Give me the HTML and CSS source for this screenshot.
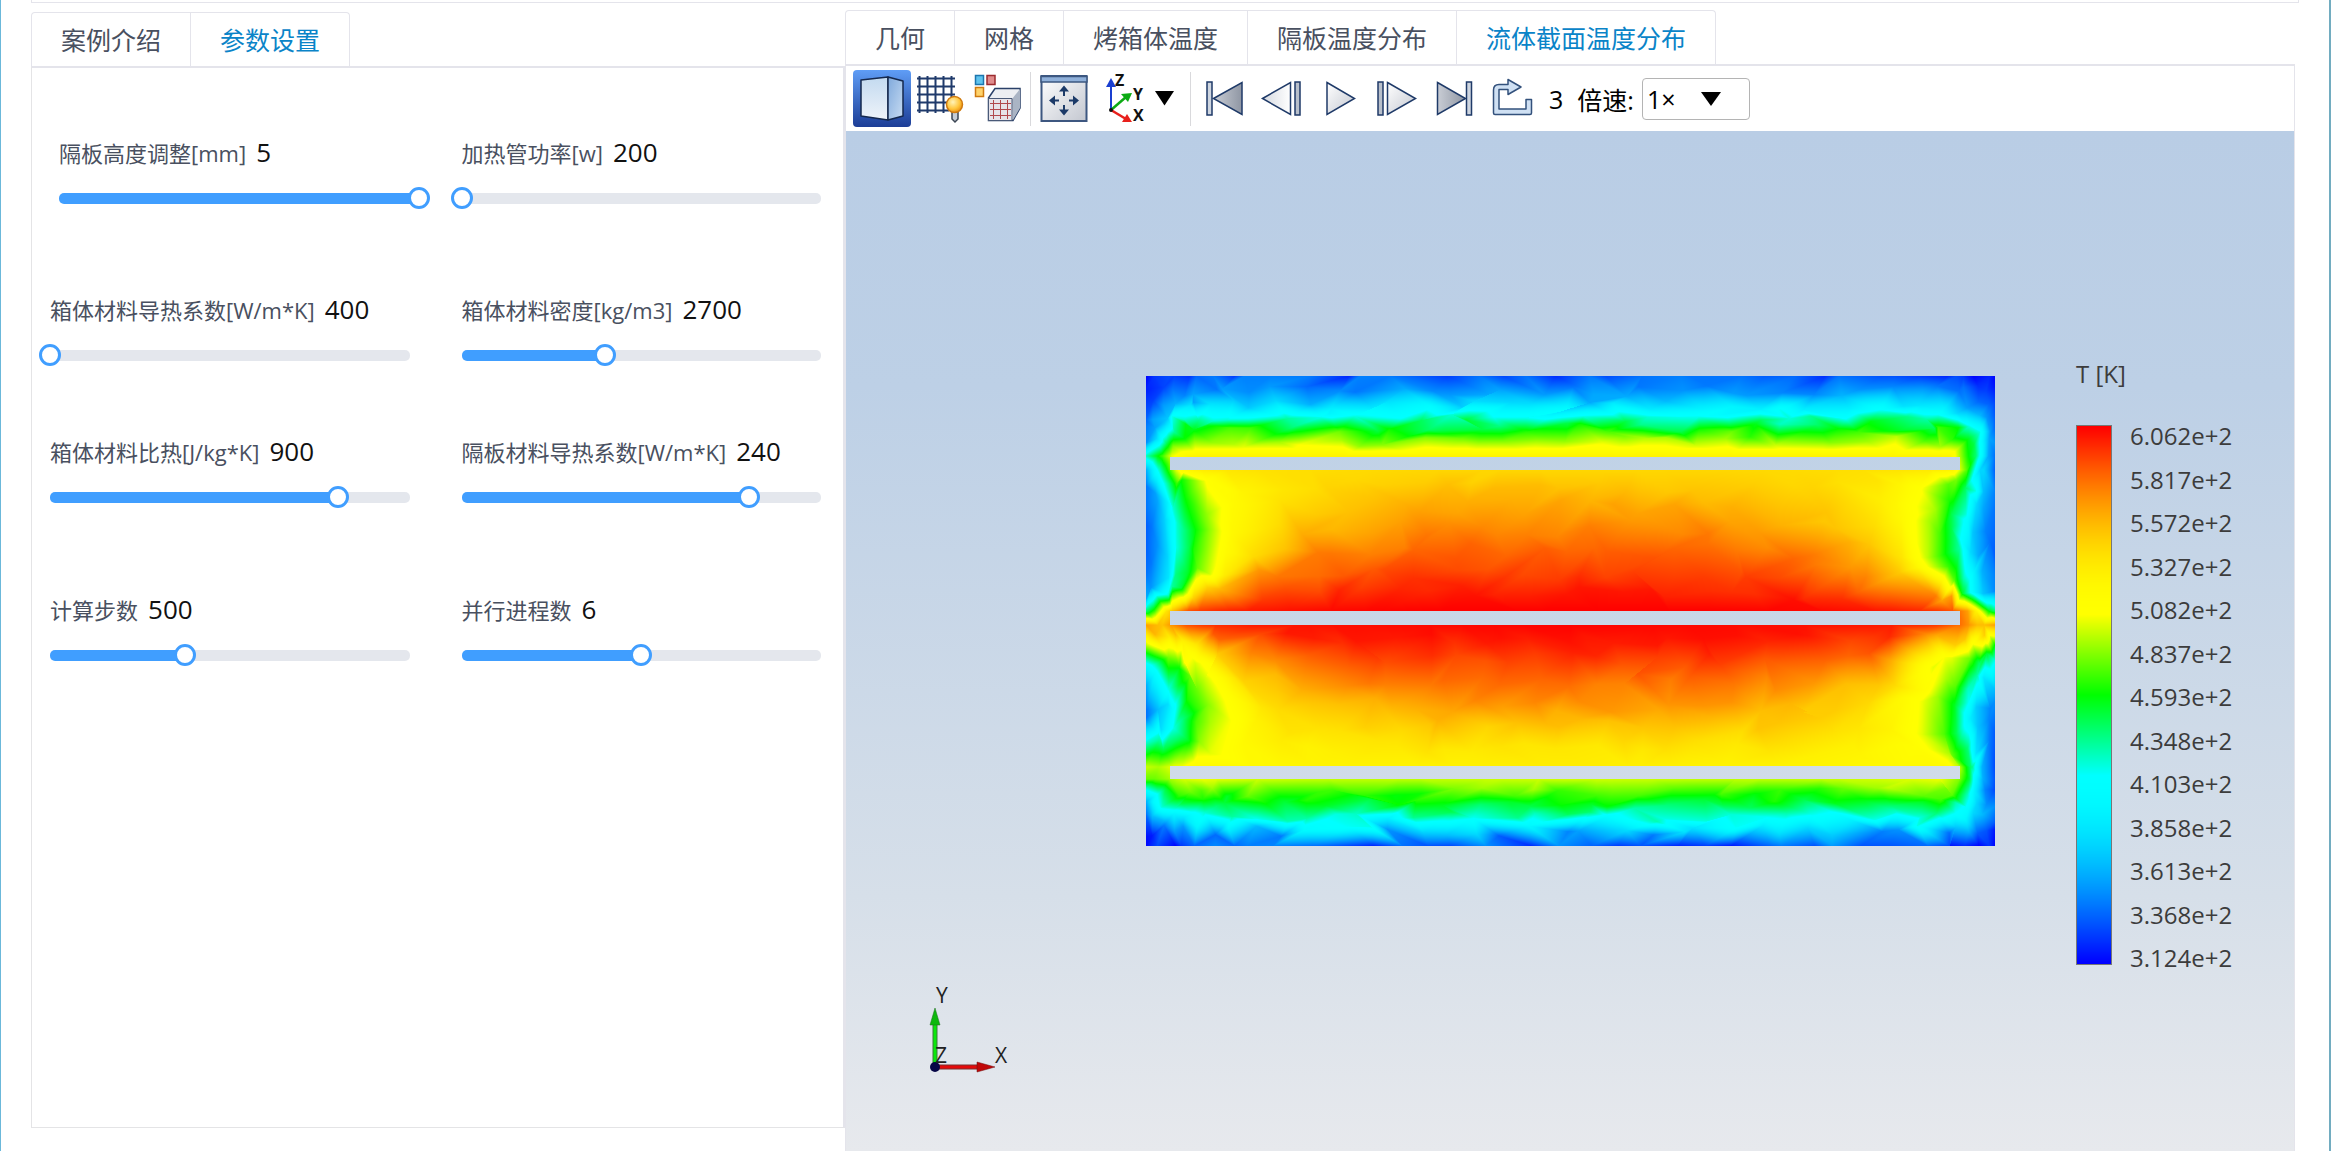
FILE: index.html
```html
<!DOCTYPE html>
<html lang="zh-CN">
<head>
<meta charset="utf-8">
<title>烤箱仿真</title>
<meta name="viewport" content="width=device-width, initial-scale=1">
<link rel="stylesheet" href="styles.css">
</head>
<body>
<div class="app">
  <div class="strip"></div>
  <main class="columns">
    <section class="settings">
      <nav class="tabs">
        <button class="tab" type="button">案例介绍</button>
        <button class="tab active" type="button">参数设置</button>
      </nav>
      <form class="params">
        <div class="param inset">
          <label class="name" for="p1">隔板高度调整[mm]</label><output class="value" for="p1">5</output>
          <div class="slider" style="--fill:100%"><input id="p1" type="range" min="0" max="100" step="any" value="100"></div>
        </div>
        <div class="param">
          <label class="name" for="p2">加热管功率[w]</label><output class="value" for="p2">200</output>
          <div class="slider" style="--fill:0%"><input id="p2" type="range" min="0" max="100" step="any" value="0"></div>
        </div>
        <div class="param">
          <label class="name" for="p3">箱体材料导热系数[W/m*K]</label><output class="value" for="p3">400</output>
          <div class="slider" style="--fill:0%"><input id="p3" type="range" min="0" max="100" step="any" value="0"></div>
        </div>
        <div class="param">
          <label class="name" for="p4">箱体材料密度[kg/m3]</label><output class="value" for="p4">2700</output>
          <div class="slider" style="--fill:40%"><input id="p4" type="range" min="0" max="100" step="any" value="40"></div>
        </div>
        <div class="param">
          <label class="name" for="p5">箱体材料比热[J/kg*K]</label><output class="value" for="p5">900</output>
          <div class="slider" style="--fill:80%"><input id="p5" type="range" min="0" max="100" step="any" value="80"></div>
        </div>
        <div class="param">
          <label class="name" for="p6">隔板材料导热系数[W/m*K]</label><output class="value" for="p6">240</output>
          <div class="slider" style="--fill:80%"><input id="p6" type="range" min="0" max="100" step="any" value="80"></div>
        </div>
        <div class="param">
          <label class="name" for="p7">计算步数</label><output class="value" for="p7">500</output>
          <div class="slider" style="--fill:37.5%"><input id="p7" type="range" min="0" max="100" step="any" value="37.5"></div>
        </div>
        <div class="param">
          <label class="name" for="p8">并行进程数</label><output class="value" for="p8">6</output>
          <div class="slider" style="--fill:50%"><input id="p8" type="range" min="0" max="100" step="any" value="50"></div>
        </div>
      </form>
    </section>

    <section class="results">
      <nav class="tabs">
        <button class="tab" type="button">几何</button>
        <button class="tab" type="button">网格</button>
        <button class="tab" type="button">烤箱体温度</button>
        <button class="tab" type="button">隔板温度分布</button>
        <button class="tab active" type="button">流体截面温度分布</button>
      </nav>
      <div class="viewer">
        <svg class="defs" width="0" height="0" aria-hidden="true">
          <defs>
            <linearGradient id="gFace" x1="0" y1="0" x2="0" y2="1"><stop offset="0" stop-color="#c3daf0"/><stop offset="1" stop-color="#eef3f9"/></linearGradient>
            <linearGradient id="gSide" x1="0" y1="0" x2="1" y2="1"><stop offset="0" stop-color="#7fa9dc"/><stop offset="1" stop-color="#c8dcf2"/></linearGradient>
            <linearGradient id="gGrey" x1="0" y1="0" x2="1" y2="1"><stop offset="0" stop-color="#ffffff"/><stop offset="1" stop-color="#c3c7d0"/></linearGradient>
            <linearGradient id="gDark" x1="0" y1="0" x2="1" y2="0"><stop offset="0" stop-color="#c9cdd5"/><stop offset="1" stop-color="#8f96a3"/></linearGradient>
            <linearGradient id="gLight" x1="0" y1="0" x2="1" y2="0"><stop offset="0" stop-color="#d5d9e0"/><stop offset="1" stop-color="#ffffff"/></linearGradient>
            <radialGradient id="gBall" cx="0.4" cy="0.35" r="0.7"><stop offset="0" stop-color="#fff3b8"/><stop offset="0.6" stop-color="#ffc63c"/><stop offset="1" stop-color="#e88a10"/></radialGradient>
          </defs>
        </svg>
        <div class="toolbar">
          <button class="tool on" type="button" aria-label="实体">
            <svg width="58" height="57" viewBox="0 0 58 57" stroke="#14284e" stroke-width="1.5" stroke-linejoin="round"><path d="M8 10 35 7V50L8 46Z" fill="url(#gFace)"/><path d="M35 7 50 11V46L35 50Z" fill="url(#gSide)"/></svg>
          </button>
          <button class="tool" type="button" aria-label="网格显示">
            <svg width="58" height="57" viewBox="0 0 58 57" fill="none"><path d="M8.500 6V43M16.500 6V43M24.500 6V43M32.500 6V43M40.500 6V36M6 8.500H44M6 16.500H44M6 24.500H44M6 32.500H38M6 40.500H38" stroke="#1f3a6b" stroke-width="2"/><path d="M41 42h6v7l-3 3-3-3z" fill="#c5ccd6" stroke="#3c4654" stroke-width="1.500"/><circle cx="43.500" cy="34.500" r="8" fill="url(#gBall)" stroke="#cf7a10" stroke-width="1.500"/></svg>
          </button>
          <button class="tool" type="button" aria-label="显示部件">
            <svg width="58" height="57" viewBox="0 0 58 57"><rect x="6.500" y="5.500" width="8" height="9" fill="#5fc3ee" stroke="#1c76ae" stroke-width="1.500"/><rect x="18" y="5.500" width="8" height="9" fill="#e08c8c" stroke="#9c2b2f" stroke-width="1.500"/><rect x="6.500" y="17.500" width="8" height="9" fill="#ffd36b" stroke="#cf7a10" stroke-width="1.500"/><path d="M19.500 28 26 18.500H51V38L44 50.500H19.500Z" fill="#eceef2" stroke="#2a4068" stroke-width="1.500"/><path d="M43 29 51 19V38L44 50Z" fill="#aab4c4"/><path d="M19.500 28.500H43V50.500H19.500Z" fill="#e6e3e9" stroke="#4a5a78"/><path d="M24.500 30V49M31.500 30V49M38.500 30V49M21 33.500H42M21 39.500H42M21 45.500H42" stroke="#b0484c" stroke-width="1"/></svg>
          </button>
          <span class="sep"></span>
          <button class="tool" type="button" aria-label="适应窗口">
            <svg width="58" height="57" viewBox="0 0 58 57"><rect x="6.500" y="6" width="45" height="45" fill="url(#gGrey)" stroke="#3d5780" stroke-width="2"/><path d="M6 6.500H52V12H6Z" fill="#8fb0da" stroke="#3d5780" stroke-width="1.500"/><path d="M29 20V26M29 35V42M18 30.500H24M34 30.500H40" stroke="#1c3a68" stroke-width="2"/><path d="M29 15.500 34 21.500H24ZM29 45.500 34 39.500H24ZM14 30.500 20 25.500V35.500ZM44 30.500 38 25.500V35.500Z" fill="#1c3a68"/></svg>
          </button>
          <button class="tool axes" type="button" aria-label="视角">
            <svg width="78" height="57" viewBox="0 0 78 57"><path d="M12 40V14" stroke="#1a3fd0" stroke-width="2"/><path d="M12 8 17 17H7Z" fill="#1a3fd0"/><path d="M12 40 27 27" stroke="#0cab14" stroke-width="2.500"/><path d="M33 23 29 32 22 24Z" fill="#0cab14"/><path d="M12 40 27 49" stroke="#e8201c" stroke-width="2.500"/><path d="M33 52 23 52 28 44Z" fill="#e8201c"/><circle cx="12" cy="40" r="2" fill="#111"/><g class="axis-bold"><text x="16" y="16">Z</text><text x="34" y="30">Y</text><text x="34" y="51">X</text></g><path d="M56 21H75L65.500 35.500Z" fill="#000"/></svg>
          </button>
          <span class="sep"></span>
          <button class="tool" type="button" aria-label="第一帧">
            <svg width="58" height="57" viewBox="0 0 58 57" stroke="#1f3a68" stroke-width="1.500"><path d="M12 12h5v33h-5z" fill="#cfd6e0"/><path d="M18.500 28.500 47 12.500V44.500Z" fill="url(#gDark)"/></svg>
          </button>
          <button class="tool" type="button" aria-label="上一帧">
            <svg width="58" height="57" viewBox="0 0 58 57" stroke="#1f3a68" stroke-width="1.500"><path d="M9.500 28.500 37.500 12.500V44.500Z" fill="url(#gLight)"/><path d="M42 12h5v33h-5z" fill="#b8bfca"/></svg>
          </button>
          <button class="tool" type="button" aria-label="播放">
            <svg width="58" height="57" viewBox="0 0 58 57" stroke="#1f3a68" stroke-width="1.500"><path d="M16 12.500 43.500 28.500 16 44.500Z" fill="url(#gGrey)"/></svg>
          </button>
          <button class="tool" type="button" aria-label="下一帧">
            <svg width="58" height="57" viewBox="0 0 58 57" stroke="#1f3a68" stroke-width="1.500"><path d="M9 12h5v33h-5z" fill="#b8bfca"/><path d="M18.500 12.500 46.500 28.500 18.500 44.500Z" fill="url(#gGrey)"/></svg>
          </button>
          <button class="tool" type="button" aria-label="最后一帧">
            <svg width="58" height="57" viewBox="0 0 58 57" stroke="#1f3a68" stroke-width="1.500"><path d="M10.500 12.500 38.500 28.500 10.500 44.500Z" fill="url(#gDark)"/><path d="M39.500 12h5v33h-5z" fill="#cfd6e0"/></svg>
          </button>
          <button class="tool" type="button" aria-label="循环">
            <svg width="58" height="57" viewBox="0 0 58 57" stroke="#33517c" stroke-width="1.500" stroke-linejoin="round"><path d="M8.500 43V20Q8.500 14.500 14 14.500H23V9.500L36 17 23 24.500V19.500H14V39H41V29.500H46.500V43Q46.500 44.500 45 44.500H10Q8.500 44.500 8.500 43Z" fill="#cfe0f3"/></svg>
          </button>
          <span class="frame">3</span>
          <label class="speed-label" for="speed">倍速:</label>
          <span class="speed"><select id="speed"><option>1×</option><option>2×</option><option>4×</option></select></span>
        </div>
        <div class="scene">
          <canvas class="field" id="field" width="849" height="470"></canvas>
          <div class="legend">
            <div class="legend-title">T [K]</div>
            <div class="legend-body">
              <canvas class="bar" id="bar" width="34" height="538"></canvas>
              <ol class="ticks">
                <li>6.062e+2</li><li>5.817e+2</li><li>5.572e+2</li><li>5.327e+2</li><li>5.082e+2</li><li>4.837e+2</li><li>4.593e+2</li><li>4.348e+2</li><li>4.103e+2</li><li>3.858e+2</li><li>3.613e+2</li><li>3.368e+2</li><li>3.124e+2</li>
              </ol>
            </div>
          </div>
          <svg class="triad" width="100" height="106" viewBox="0 -10 100 106">
            <path d="M14 82V34" stroke="#3a7a3a" stroke-width="5"/><path d="M14 82V34" stroke="#0be80b" stroke-width="3"/><path d="M14 23 19 40H9Z" fill="#0cb80c" stroke="#1c6a1c" stroke-width=".5"/>
            <path d="M14 82H60" stroke="#7a3030" stroke-width="5"/><path d="M14 82H60" stroke="#e40a0a" stroke-width="3"/><path d="M74 82 56 77V87Z" fill="#c00808" stroke="#6a1010" stroke-width=".5"/>
            <circle cx="14" cy="82" r="5" fill="#060646"/>
            <g class="axis-name"><text x="15" y="18">Y</text><text x="74" y="78">X</text><text x="14" y="78">Z</text></g>
          </svg>
        </div>
      </div>
    </section>
  </main>
</div>
<script src="field.js"></script>
</body>
</html>
```
FILE: styles.css
```css
* { box-sizing: border-box; }

body {
  margin: 0;
  background: #fff;
  color: #111;
  font-family: "Open Sans", "Noto Sans CJK SC", sans-serif;
  font-size: 25px;
}

button, select { font: inherit; }

.app {
  display: flex;
  flex-direction: column;
  min-height: 100vh;
  padding: 0 30px;
  border-left: 1px solid #6bb8da;
  border-right: 2px solid #72acc0;
}

.strip {
  height: 3px;
  border: 1px solid #e4e4eb;
  border-top: 0;
}

.columns {
  flex: 1;
  display: grid;
  grid-template-columns: 814fr 1450fr;
  margin-right: 4px;
}

.settings {
  display: flex;
  flex-direction: column;
  padding: 9px 0 23px;
}

.results {
  display: flex;
  flex-direction: column;
  padding-top: 7px;
}

/* tabs */
.tabs {
  display: flex;
  height: 54px;
}

.tab {
  padding: 0 29px;
  border: solid #e4e4eb;
  border-width: 1px 1px 0 0;
  background: #fff;
  color: #495060;
  line-height: 48px;
  white-space: nowrap;
}

.tab:first-child { border-left-width: 1px; border-top-left-radius: 4px; }
.tab:last-child { border-top-right-radius: 4px; }
.tab.active { color: #0a84c8; }

/* parameters */
.params {
  flex: 1;
  display: grid;
  grid-template-columns: 360fr 360fr;
  grid-template-rows: 157px 142px 158px auto;
  align-content: start;
  column-gap: 52px;
  padding: 66px 22px 0 18px;
  border: 1px solid #e4e4e6;
  border-top: 2px solid #e4e4eb;
  border-right: 2px solid #e4e4eb;
}

.param { white-space: nowrap; }
.param.inset { position: relative; left: 9px; }

.name {
  display: inline-block;
  margin-right: 10px;
  color: #495060;
  font-size: 22px;
  line-height: 36px;
}

.value {
  font-size: 26px;
  line-height: 36px;
}

.slider {
  display: grid;
  align-items: center;
  height: 22px;
  margin-top: 16px;
}

.slider::before {
  content: "";
  grid-area: 1 / 1;
  height: 11px;
  border-radius: 5px;
  background: linear-gradient(to right, #409eff var(--fill), #e4e7ed var(--fill));
}

.slider input {
  grid-area: 1 / 1;
  appearance: none;
  height: 22px;
  margin: 0 -11px;
  background: transparent;
}

.slider input::-webkit-slider-thumb {
  appearance: none;
  width: 22px;
  height: 22px;
  border: 3px solid #409eff;
  border-radius: 50%;
  background: #fff;
}

/* viewer */
.viewer {
  flex: 1;
  display: flex;
  flex-direction: column;
  border: solid #e4e4eb;
  border-width: 2px 1px 0;
}

.defs { position: absolute; }

.toolbar {
  display: flex;
  align-items: center;
  height: 65px;
  padding-left: 7px;
  color: #000;
}

.tool {
  width: 58px;
  height: 57px;
  padding: 0;
  border: 0;
  border-radius: 4px;
  background: none;
}

.tool svg { display: block; overflow: visible; }
.tool.on { background: linear-gradient(#5f9df6, #1c3d96); }
.tool.axes { width: 78px; margin: 0 10px 0 6px; }

.sep {
  width: 1px;
  height: 54px;
  margin: 0 4px 0 3px;
  background: #d9d9dc;
}

.axis-bold {
  font: bold 16px "Open Sans", sans-serif;
  fill: #111;
}

.frame { margin: 0 14px 0 6px; }

.speed-label { margin-right: 8px; }

.speed {
  display: flex;
  align-items: center;
  width: 108px;
  height: 42px;
  border: 1px solid #b4b4b4;
  border-radius: 4px;
}

.speed select {
  flex: 1;
  width: 100%;
  height: 40px;
  padding: 0 0 0 4px;
  border: 0;
  background: none;
  color: #000;
  appearance: none;
}

.speed::after {
  content: "";
  margin: 0 28px 0 -48px;
  border: solid transparent;
  border-width: 14px 10px 0;
  border-top-color: #000;
  pointer-events: none;
}

.scene {
  position: relative;
  flex: 1;
  display: grid;
  grid-template-columns: 300fr 849fr 299fr;
  align-items: start;
  background: linear-gradient(#b9cde5, #bdd0e6 25%, #d6dfe9 75%, #e7e9ed);
}

.field {
  grid-column: 2;
  width: 100%;
  margin-top: 245px;
}

.legend {
  margin: 227px 0 0 81px;
  color: #3c3c3c;
  font-size: 24px;
}

.legend-title { line-height: 32px; }

.legend-body {
  display: flex;
  align-items: flex-start;
  gap: 18px;
  margin-top: 32px;
}

.bar {
  margin-top: 3px;
  border: 1px solid #777;
}

.ticks {
  display: flex;
  flex-direction: column;
  justify-content: space-between;
  height: 548px;
  margin: 0;
  padding: 2px 0 0;
  list-style: none;
  line-height: 24px;
}

.triad {
  position: absolute;
  left: 75px;
  bottom: 70px;
  overflow: visible;
}

.axis-name {
  font: 21px "Open Sans", sans-serif;
  fill: #222;
}
```
FILE: field.js
```js
// Normalised temperature (0 = coldest, 1 = hottest) to colour.
function shade(t) {
  t = Math.max(0, Math.min(1, t));
  if (t < 0.35) return [0, 255 * Math.sin(Math.PI / 2 * t / 0.35), 255];
  if (t < 0.5) return [0, 255, 255 * (0.5 - t) / 0.15];
  if (t < 0.65) return [255 * (t - 0.5) / 0.15, 255, 0];
  return [255, 255 * Math.sin(Math.PI / 2 * (1 - t) / 0.35), 0];
}

// The table below is linear in colour; undo the easing of the outer bands.
function ease(t) {
  t = Math.max(0, Math.min(1, t));
  if (t < 0.35) return 0.35 * Math.asin(t / 0.35) * 2 / Math.PI;
  if (t > 0.65) return 1 - 0.35 * Math.asin((1 - t) / 0.35) * 2 / Math.PI;
  return t;
}

// Distance from the side wall, and temperatures by height.
const dist = [0, 14, 28, 40, 54, 75, 110, 180, 280, 425];
const rows = [
  [0, 0, .02, .05, .07, .08, .13, .12, .1, .13, .11],
  [18, .05, .1, .15, .18, .2, .22, .22, .2, .23, .2],
  [36, .1, .2, .28, .33, .34, .34, .35, .34, .35, .33],
  [46, .13, .27, .36, .4, .42, .43, .43, .42, .42, .42],
  [53, .15, .32, .42, .48, .5, .5, .52, .5, .5, .5],
  [64, .2, .38, .52, .56, .58, .6, .6, .59, .59, .58],
  [76, .38, .52, .64, .65, .65, .65, .65, .65, .65, .65],
  [87, .37, .48, .68, .68, .69, .69, .69, .69, .69, .69],
  [96, .2, .38, .6, .66, .67, .68, .69, .7, .71, .71],
  [112, .17, .28, .43, .52, .61, .65, .67, .7, .73, .73],
  [150, .13, .22, .33, .43, .53, .65, .67, .75, .8, .81],
  [175, .12, .22, .33, .44, .54, .65, .71, .82, .86, .87],
  [198, .15, .25, .36, .48, .61, .67, .79, .88, .91, .92],
  [218, .22, .32, .46, .62, .68, .76, .88, .94, .96, .97],
  [235, .42, .6, .78, .88, .92, .95, .97, .99, 1, 1],
  [248, .78, .73, .82, .9, .93, .95, .97, .98, .99, 1],
  [258, .78, .73, .7, .76, .82, .89, .95, .97, .98, .98],
  [268, .7, .66, .66, .69, .73, .8, .89, .94, .96, .97],
  [282, .4, .45, .6, .64, .66, .69, .8, .88, .91, .92],
  [310, .22, .3, .41, .51, .6, .66, .7, .79, .83, .84],
  [335, .14, .25, .35, .45, .54, .64, .67, .73, .77, .78],
  [360, .23, .31, .39, .47, .57, .64, .67, .69, .7, .71],
  [375, .5, .48, .52, .56, .62, .65, .66, .67, .68, .68],
  [390, .62, .6, .64, .65, .66, .66, .66, .67, .67, .68],
  [402, .58, .57, .62, .64, .65, .64, .63, .62, .62, .63],
  [412, .4, .5, .54, .56, .57, .57, .57, .57, .56, .57],
  [423, .3, .38, .46, .49, .5, .5, .5, .5, .5, .5],
  [436, .2, .3, .34, .36, .38, .4, .42, .42, .42, .42],
  [448, .1, .2, .28, .32, .33, .34, .34, .34, .34, .34],
  [459, .03, .1, .15, .17, .17, .21, .2, .22, .2, .22],
  [470, 0, 0, .04, .06, .06, .11, .09, .1, .08, .1]
];
// The right wall stays colder beside the upper and lower shelves.
const coldRight = {
  76: [.14, .32, .52], 87: [.13, .32, .6], 96: [.13, .3, .54],
  360: [.12, .26, .35], 375: [.11, .25, .41], 390: [.1, .25, .54],
  402: [.1, .24, .48], 412: [.1, .24, .41], 423: [.1, .22, .35]
};
const W = 849, H = 470;

function rowValue(row, x) {
  const right = x > W / 2;
  const d = Math.max(0, Math.min(424.9, right ? W - x : x));
  let i = 0;
  while (dist[i + 1] <= d) i++;
  const cold = right ? coldRight[row[0]] : null;
  const at = k => cold && k < 3 ? cold[k] : row[k + 1];
  const f = (d - dist[i]) / (dist[i + 1] - dist[i]);
  return at(i) * (1 - f) + at(i + 1) * f;
}

function temperature(x, y) {
  y = Math.max(0, Math.min(H - 0.01, y));
  let j = 0;
  while (rows[j + 1][0] <= y) j++;
  const f = (y - rows[j][0]) / (rows[j + 1][0] - rows[j][0]);
  return rowValue(rows[j], x) * (1 - f) + rowValue(rows[j + 1], x) * f;
}

let seed = 20;
function rand() {
  seed = (seed * 1664525 + 1013904223) >>> 0;
  return seed / 4294967296 * 2 - 1;
}

// Unstructured-looking mesh: fine by the walls, coarse in the middle.
const xs = [0, 9, 19, 29, 40, 52, 65, 80];
while (xs[xs.length - 1] < 755) xs.push(xs[xs.length - 1] + 28);
xs.push(797, 809, 820, 830, 840, W);
const ys = [0, 15, 29, 41, 52, 66, 80, 94, 110, 130, 152, 174, 196, 217, 235, 249, 264, 284, 306, 328, 350, 372, 391, 403, 416, 428, 441, 455, H];
const walls = [80, 94, 235, 249, 391, 403];
const nodes = ys.map((y, j) => xs.map((x, i) => {
  const edgeX = i === 0 || i === xs.length - 1;
  const edgeY = j === 0 || j === ys.length - 1;
  const wall = walls.includes(y);
  const stepX = edgeX ? 0 : (xs[i + 1] - xs[i - 1]) / 2;
  const stepY = edgeY ? 0 : (ys[j + 1] - ys[j - 1]) / 2;
  const px = edgeX ? x : x + rand() * stepX * 0.45;
  const py = edgeY || wall ? y : y + rand() * stepY * 0.4;
  const warm = y > 94 && y < 391;
  const reach = wall ? 0 : warm ? 9 : 7;
  let t = temperature(px + rand() * 2, py + rand() * reach);
  if (edgeY) t = Math.max(0, t + rand() * 0.06);
  return [px, py, ease(t)];
}));

const canvas = document.getElementById("field");
const ctx = canvas.getContext("2d");
const image = ctx.createImageData(W, H);

function triangle(a, b, c) {
  const area = (b[0] - a[0]) * (c[1] - a[1]) - (c[0] - a[0]) * (b[1] - a[1]);
  const x0 = Math.max(0, Math.floor(Math.min(a[0], b[0], c[0])));
  const x1 = Math.min(W - 1, Math.ceil(Math.max(a[0], b[0], c[0])));
  const y0 = Math.max(0, Math.floor(Math.min(a[1], b[1], c[1])));
  const y1 = Math.min(H - 1, Math.ceil(Math.max(a[1], b[1], c[1])));
  for (let y = y0; y <= y1; y++) {
    for (let x = x0; x <= x1; x++) {
      const px = x + 0.5, py = y + 0.5;
      const v = ((px - a[0]) * (c[1] - a[1]) - (c[0] - a[0]) * (py - a[1])) / area;
      const w = ((b[0] - a[0]) * (py - a[1]) - (px - a[0]) * (b[1] - a[1])) / area;
      const u = 1 - v - w;
      if (u < -0.001 || v < -0.001 || w < -0.001) continue;
      const rgb = shade(a[2] * u + b[2] * v + c[2] * w);
      const k = (y * W + x) * 4;
      image.data[k] = rgb[0];
      image.data[k + 1] = rgb[1];
      image.data[k + 2] = rgb[2];
      image.data[k + 3] = 255;
    }
  }
}

for (let j = 0; j < ys.length - 1; j++) {
  for (let i = 0; i < xs.length - 1; i++) {
    const a = nodes[j][i], b = nodes[j][i + 1], c = nodes[j + 1][i], d = nodes[j + 1][i + 1];
    if (rand() > 0) { triangle(a, b, d); triangle(a, d, c); }
    else { triangle(a, b, c); triangle(b, d, c); }
  }
}
ctx.putImageData(image, 0, 0);
// Shelves are openings through which the backdrop shows.
ctx.clearRect(24, 81, 790, 13);
ctx.clearRect(24, 235, 790, 14);
ctx.clearRect(24, 390, 790, 13);

const bar = document.getElementById("bar");
const barCtx = bar.getContext("2d");
for (let y = 0; y < bar.height; y++) {
  barCtx.fillStyle = "rgb(" + shade(1 - y / (bar.height - 1)).map(Math.round).join(",") + ")";
  barCtx.fillRect(0, y, bar.width, 1);
}
```
